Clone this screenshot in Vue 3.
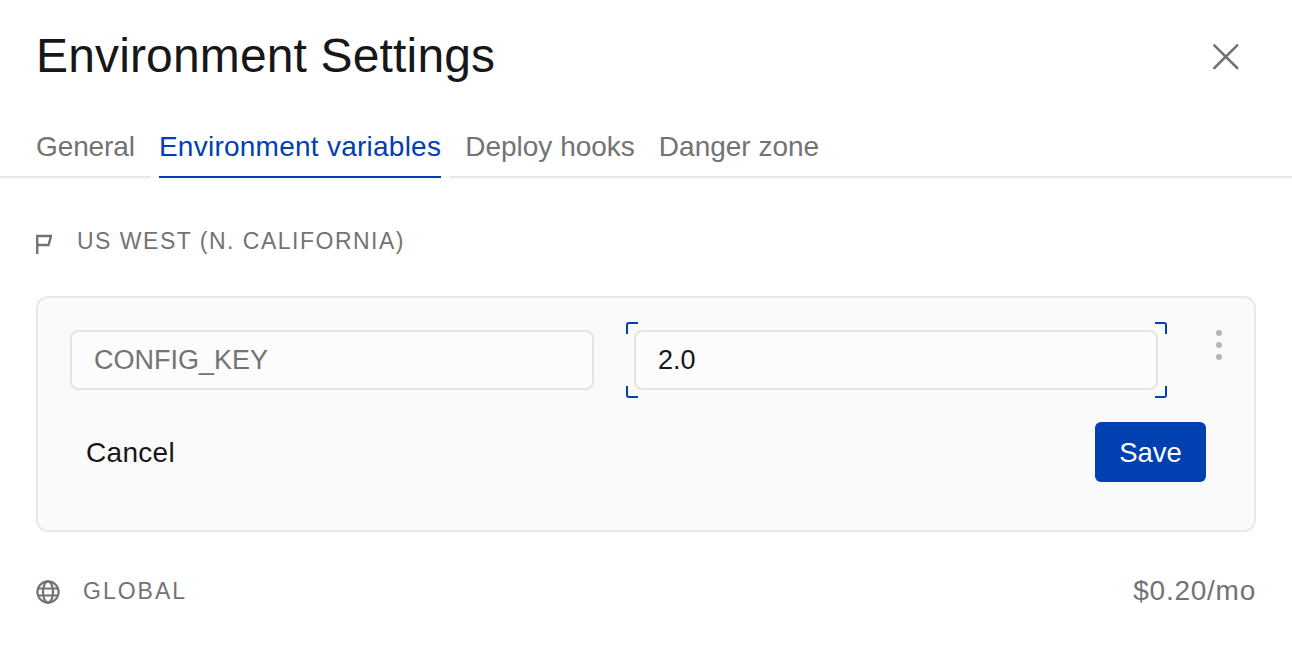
<script setup>
import { ref } from 'vue';

const tabs = ['General', 'Environment variables', 'Deploy hooks', 'Danger zone'];
const activeTab = ref('Environment variables');
const configKey = ref('');
const configValue = ref('2.0');
</script>

<template>
    <div class="settings">
        <header class="head">
            <h1 class="title">Environment Settings</h1>
            <button class="close" aria-label="Close">
                <svg width="30" height="30" viewBox="0 0 30 30" fill="none" stroke="#737373" stroke-width="2.6" stroke-linecap="round">
                    <path d="M4.3 3.3 L27.2 26 M27.2 3.3 L4.3 26" />
                </svg>
            </button>
        </header>

        <nav class="tabs">
            <div class="tab-fill tab-fill-first"></div>
            <a
                v-for="tab in tabs"
                :key="tab"
                class="tab"
                :class="{ active: tab === activeTab }"
                @click="activeTab = tab"
            >{{ tab }}</a>
            <div class="tab-fill tab-fill-last"></div>
        </nav>

        <section class="region">
            <div class="section-label">
                <svg class="flag" width="16" height="20" viewBox="0 0 16 20" fill="none" stroke="#737373" stroke-width="2.4">
                    <path d="M1.2 20 V2 H15 L12.5 11 H1.2" />
                </svg>
                <span>US WEST (N. CALIFORNIA)</span>
            </div>

            <div class="card">
                <div class="fields">
                    <input class="field key" v-model="configKey" placeholder="CONFIG_KEY" />
                    <div class="focus-wrap">
                        <input class="field value" v-model="configValue" />
                        <i class="corner tl"></i>
                        <i class="corner tr"></i>
                        <i class="corner bl"></i>
                        <i class="corner br"></i>
                    </div>
                    <div class="dots">
                        <i></i>
                        <i></i>
                        <i></i>
                    </div>
                </div>
                <div class="actions">
                    <button class="cancel">Cancel</button>
                    <button class="save">Save</button>
                </div>
            </div>
        </section>

        <footer class="global">
            <div class="section-label global-label">
                <svg class="globe" width="24" height="24" viewBox="0 0 24 24" fill="none" stroke="#737373" stroke-width="2.2">
                    <circle cx="12" cy="12" r="10.6" />
                    <ellipse cx="12" cy="12" rx="5" ry="10.6" />
                    <path d="M2 8.5 H22 M2 15.5 H22" />
                </svg>
                <span>GLOBAL</span>
            </div>
            <span class="price">$0.20/mo</span>
        </footer>
    </div>
</template>

<style scoped>
.settings {
    width: 1292px;
    height: 648px;
    box-sizing: border-box;
    background: #fff;
    font-family: "Liberation Sans", Arial, sans-serif;
    color: #171717;
    overflow: hidden;
}

.head {
    display: flex;
    align-items: center;
    justify-content: space-between;
    height: 112px;
    padding: 0 52px 0 36px;
}

.title {
    margin: 0;
    font-size: 48px;
    font-weight: 400;
    line-height: 112px;
    letter-spacing: 0.15px;
}

.close {
    display: flex;
    padding: 0;
    margin-top: 2px;
    border: 0;
    background: none;
}

.tabs {
    display: flex;
    height: 66px;
    box-sizing: border-box;
}

.tab-fill {
    border-bottom: 2px solid #e8e8e8;
}

.tab-fill-first {
    width: 36px;
}

.tab-fill-last {
    flex: 1;
}

.tab {
    padding: 0 12px;
    font-size: 28px;
    line-height: 70px;
    color: #737373;
    border-bottom: 2px solid #e8e8e8;
    cursor: pointer;
}

.tab:first-of-type {
    padding: 0 16px 0 0;
    letter-spacing: -0.1px;
}

.tab.active {
    padding: 0;
    margin: 0 8px;
    letter-spacing: 0.25px;
    color: #0040b0;
    border-bottom-color: #0040b0;
}

.tab.active + .tab {
    padding-left: 16px;
}

.region {
    padding: 0 36px;
}

.section-label {
    display: flex;
    align-items: center;
    gap: 25px;
    height: 24px;
    margin-top: 51px;
    font-size: 23px;
    letter-spacing: 1.5px;
    color: #737373;
}

.flag {
    margin-top: 5px;
}

.card {
    margin-top: 43px;
    height: 236px;
    box-sizing: border-box;
    padding: 32px;
    background: #fafafa;
    border: 2px solid #e8e8e8;
    border-radius: 12px;
}

.fields {
    display: flex;
    align-items: flex-start;
    gap: 40px;
}

.field {
    display: block;
    flex-shrink: 0;
    width: 524px;
    height: 60px;
    box-sizing: border-box;
    padding: 0 22px;
    font-family: inherit;
    font-size: 27px;
    color: #171717;
    background: #fcfcfc;
    border: 2px solid #e3e3e3;
    border-radius: 8px;
    outline: none;
}

.field::placeholder {
    color: #737373;
    opacity: 1;
}

.focus-wrap {
    position: relative;
}

.corner {
    position: absolute;
    width: 10px;
    height: 10px;
    border: 0 solid #0040b0;
}

.corner.tl {
    top: -8px;
    left: -8px;
    border-width: 2px 0 0 2px;
    border-top-left-radius: 3px;
}

.corner.tr {
    top: -8px;
    right: -9px;
    border-width: 2px 2px 0 0;
    border-top-right-radius: 3px;
}

.corner.bl {
    bottom: -8px;
    left: -8px;
    border-width: 0 0 2px 2px;
    border-bottom-left-radius: 3px;
}

.corner.br {
    bottom: -8px;
    right: -9px;
    border-width: 0 2px 2px 0;
    border-bottom-right-radius: 3px;
}

.dots {
    display: flex;
    flex-direction: column;
    gap: 6px;
    margin-left: 18px;
}

.dots i {
    display: block;
    width: 6px;
    height: 6px;
    border-radius: 50%;
    background: #b4b4bc;
}

.actions {
    display: flex;
    align-items: center;
    justify-content: space-between;
    margin-top: 32px;
    padding-right: 16px;
}

.cancel {
    padding: 2px 16px 0;
    border: 0;
    background: none;
    font-family: inherit;
    font-size: 28px;
    letter-spacing: 0.3px;
    color: #171717;
}

.save {
    width: 111px;
    height: 60px;
    padding: 2px 0 0;
    border: 0;
    border-radius: 6px;
    background: #0040b0;
    font-family: inherit;
    font-size: 27.5px;
    color: #fff;
}

.global {
    display: flex;
    align-items: center;
    justify-content: space-between;
    margin-top: 43px;
    padding: 0 36px;
}

.global-label {
    margin-top: 0;
    gap: 23px;
    letter-spacing: 2px;
}

.globe {
    margin-top: 2px;
}

.price {
    font-size: 28px;
    letter-spacing: 0.75px;
    color: #737373;
}
</style>
